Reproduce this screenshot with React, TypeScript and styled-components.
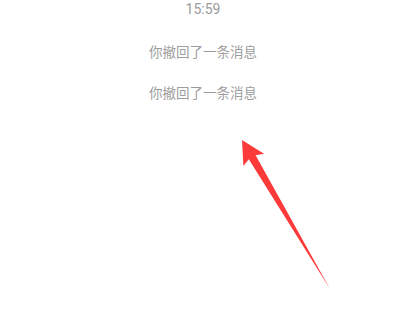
import React from "react";
import styled, { createGlobalStyle } from "styled-components";

const Global = createGlobalStyle`
  html, body { margin: 0; padding: 0; background: #ffffff; }
  #root { width: 417px; height: 332px; }
`;

const Screen = styled.div`
  position: relative;
  width: 417px;
  height: 332px;
  background: #ffffff;
  overflow: hidden;
  box-sizing: border-box;
  padding: 1px 11px 0 0;
  display: flex;
  flex-direction: column;
  align-items: center;
`;

const Time = styled.div`
  font-family: Roboto, "Noto Sans", sans-serif;
  font-size: 14px;
  line-height: 16px;
  color: #9b9b9b;
`;

const Notices = styled.div`
  margin-top: 24px;
  display: flex;
  flex-direction: column;
  align-items: center;
  gap: 21px;
`;

const Notice = styled.div`
  font-family: "Noto Sans CJK SC", "Noto Sans", sans-serif;
  font-size: 13.5px;
  line-height: 20px;
  color: #9d9d9d;
`;

const Overlay = styled.svg`
  position: absolute;
  left: 0;
  top: 0;
  pointer-events: none;
`;

export default function App() {
  return (
    <>
      <Global />
      <Screen>
        <Time>15:59</Time>
        <Notices>
          <Notice>你撤回了一条消息</Notice>
          <Notice>你撤回了一条消息</Notice>
        </Notices>
        <Overlay width="417" height="332" viewBox="0 0 417 332">
          <polygon
            points="242,140 243.4,166 248.8,159.2 330,289 255.6,155.2 264,153.7"
            fill="#fd3a3a"
          />
        </Overlay>
      </Screen>
    </>
  );
}
